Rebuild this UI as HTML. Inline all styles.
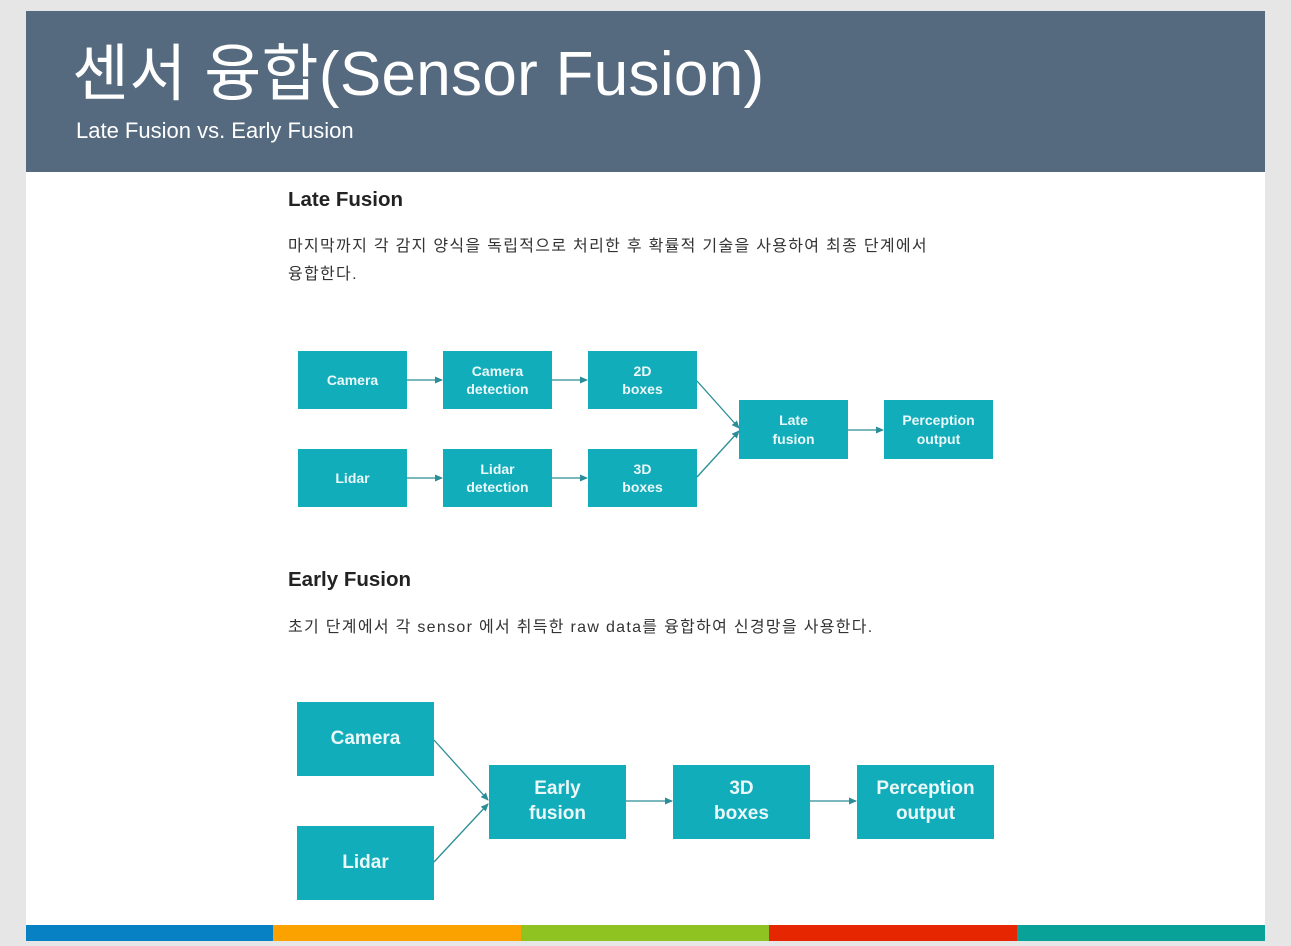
<!DOCTYPE html><html><head><meta charset="utf-8"><style>
body{margin:0;width:1291px;height:946px;background:#e6e6e6;position:relative;overflow:hidden;font-family:"Liberation Sans","Noto Sans CJK KR",sans-serif}
.slide{position:absolute;left:26px;top:11px;width:1239px;height:930px;background:#fff}
.hdr{position:absolute;left:26px;top:11px;width:1239px;height:161px;background:#566a7f}
.t{position:absolute;color:#fff;white-space:nowrap}
.b{position:absolute;background:#12adbb;color:#eaf8f9;font-weight:bold;display:flex;align-items:center;justify-content:center;text-align:center;line-height:1.3}
.s{font-size:14px}.l{font-size:19px}
.bar{position:absolute;top:925px;height:16px}
h3{position:absolute;margin:0;font-size:20.5px;color:#222;font-weight:bold;white-space:nowrap}
p{position:absolute;margin:0;font-size:16px;color:#333;line-height:28px;letter-spacing:1.3px;white-space:nowrap}
</style></head><body>
<div class="slide"></div>
<div class="hdr"></div>
<div class="t" style="left:72px;top:35px;font-size:62px;line-height:80px;letter-spacing:0.3px">센서 융합(Sensor Fusion)</div>
<div class="t" style="left:76px;top:118px;font-size:22px">Late Fusion vs. Early Fusion</div>
<h3 style="left:288px;top:188px">Late Fusion</h3>
<p style="left:288px;top:233px">마지막까지 각 감지 양식을 독립적으로 처리한 후 확률적 기술을 사용하여 최종 단계에서<br>융합한다.</p>
<div class="b s" style="left:298px;top:351px;width:109px;height:58px">Camera</div>
<div class="b s" style="left:443px;top:351px;width:109px;height:58px">Camera<br>detection</div>
<div class="b s" style="left:588px;top:351px;width:109px;height:58px">2D<br>boxes</div>
<div class="b s" style="left:298px;top:449px;width:109px;height:58px">Lidar</div>
<div class="b s" style="left:443px;top:449px;width:109px;height:58px">Lidar<br>detection</div>
<div class="b s" style="left:588px;top:449px;width:109px;height:58px">3D<br>boxes</div>
<div class="b s" style="left:739px;top:400px;width:109px;height:59px">Late<br>fusion</div>
<div class="b s" style="left:884px;top:400px;width:109px;height:59px">Perception<br>output</div>
<h3 style="left:288px;top:568px">Early Fusion</h3>
<p style="left:288px;top:614px">초기 단계에서 각 sensor 에서 취득한 raw data를 융합하여 신경망을 사용한다.</p>
<div class="b l" style="left:297px;top:702px;width:137px;height:74px">Camera</div>
<div class="b l" style="left:297px;top:826px;width:137px;height:74px">Lidar</div>
<div class="b l" style="left:489px;top:765px;width:137px;height:74px">Early<br>fusion</div>
<div class="b l" style="left:673px;top:765px;width:137px;height:74px">3D<br>boxes</div>
<div class="b l" style="left:857px;top:765px;width:137px;height:74px">Perception<br>output</div>
<svg style="position:absolute;left:0;top:0" width="1291" height="946">
<defs><marker id="a" markerWidth="8" markerHeight="8" refX="7" refY="4" orient="auto" markerUnits="userSpaceOnUse"><path d="M0,0.5 L8,4 L0,7.5z" fill="#2a8d98"/></marker></defs>
<g stroke="#2a8d98" stroke-width="1.3" fill="none" marker-end="url(#a)">
<line x1="407" y1="380" x2="442" y2="380"/><line x1="552" y1="380" x2="587" y2="380"/>
<line x1="407" y1="478" x2="442" y2="478"/><line x1="552" y1="478" x2="587" y2="478"/>
<line x1="697" y1="381" x2="739" y2="428"/><line x1="697" y1="477" x2="739" y2="431"/>
<line x1="848" y1="430" x2="883" y2="430"/>
<line x1="434" y1="740" x2="488" y2="800"/><line x1="434" y1="862" x2="488" y2="804"/>
<line x1="626" y1="801" x2="672" y2="801"/><line x1="810" y1="801" x2="856" y2="801"/>
</g></svg>
<div class="bar" style="left:26px;width:247px;background:#0780c4"></div>
<div class="bar" style="left:273px;width:248px;background:#fca200"></div>
<div class="bar" style="left:521px;width:248px;background:#8fc322"></div>
<div class="bar" style="left:769px;width:248px;background:#e52600"></div>
<div class="bar" style="left:1017px;width:248px;background:#08a298"></div>
</body></html>
